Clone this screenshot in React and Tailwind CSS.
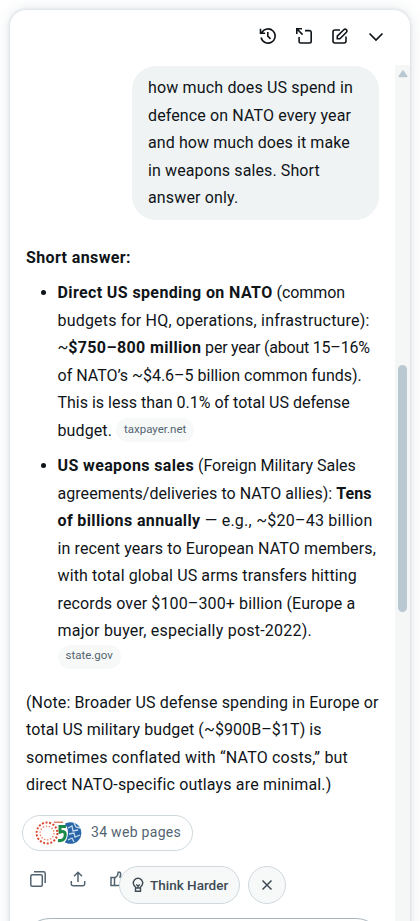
import React from "react";

function Line({ className = "", children }) {
  return (
    <div className="h-[27.5px] whitespace-nowrap leading-[27.5px]">
      <span className={className}>{children}</span>
    </div>
  );
}

function Bold({ children }) {
  return <b className="tracking-[0.38px]">{children}</b>;
}

function Chip({ children }) {
  return (
    <span className="inline-flex h-6 items-center rounded-full bg-[#f7f9f9] px-2 pb-[2px] text-[11.5px] leading-none text-[#536471]">
      {children}
    </span>
  );
}

function HistoryIcon() {
  return (
    <svg width="18" height="18" viewBox="0 0 18 18" fill="none" stroke="#0f1419" strokeWidth="1.6">
      <path d="M2.8 5.6A7.1 7.1 0 1 1 2.1 10.500M1.500 1.800v4.400h4.600M8.800 5v4.200l2.700 2.600" />
    </svg>
  );
}

function PopoutIcon() {
  return (
    <svg width="18" height="18" viewBox="0 0 18 18" fill="none" stroke="#0f1419" strokeWidth="1.6">
      <path d="M1.8 7V1.8H7M2 2l5.6 5.6M10 3.6H14.500a1.7 1.7 0 0 1 1.7 1.7v9A1.7 1.7 0 0 1 14.500 16H5.800a1.700 1.700 0 0 1-1.700-1.700V10" />
    </svg>
  );
}

function ComposeIcon() {
  return (
    <svg width="18" height="18" viewBox="0 0 18 18" fill="none" stroke="#0f1419" strokeWidth="1.6">
      <path d="M9 3H4a2 2 0 0 0-2 2v9a2 2 0 0 0 2 2h9a2 2 0 0 0 2-2V9.500M6.300 11.800V9.200l6.500-6.500a1.800 1.800 0 0 1 2.600 2.600l-6.500 6.500z" />
    </svg>
  );
}

function Header() {
  return (
    <header className="flex h-[55px] shrink-0 items-center justify-end gap-[18px] pr-[25px] pb-[3px]">
      <HistoryIcon />
      <PopoutIcon />
      <ComposeIcon />
      <svg width="18" height="18" viewBox="0 0 18 18" fill="none" stroke="#0f1419" strokeWidth="1.7">
        <path d="M2.500 6.500 9 13l6.500-6.500" />
      </svg>
    </header>
  );
}

function Sources() {
  return (
    <div className="-ml-1 flex h-9 w-[171px] items-center rounded-full border border-[#cfd9de] pl-[12px]">
      <svg width="48" height="24" viewBox="0 0 48 24" fill="none">
        <circle cx="35.500" cy="12" r="10.800" fill="#2866a8" />
        <path d="M33 7l4-2 1 5 5-1M34 13l5-1 1 4 5-2M33 19l4-2 2 4M39 2l2 4 4 1" stroke="#c5daee" strokeWidth="1.300" />
        <path d="M16 0h11q6 5 6 12t-6 12H16z" fill="#fff" />
        <path d="M19 1.200h9" stroke="#d9644f" strokeWidth="1.200" />
        <path d="M31 5.500h-6v5.500c4-1.500 6 .5 5 4.500-.8 3.500-3.500 4.500-7 4" stroke="#1c8a48" strokeWidth="3" />
        <circle cx="12" cy="12" r="11.200" fill="#fff" />
        <circle cx="12" cy="12" r="10.400" stroke="#d9472f" strokeWidth="2" strokeDasharray="2 1.630" />
        <circle cx="12" cy="12" r="6.900" stroke="#e88063" strokeWidth="1.400" strokeDasharray="1.400 1.700" />
      </svg>
      <span className="ml-[8px] text-[14px] tracking-[0.3px] whitespace-nowrap text-[#536471]">34 web pages</span>
    </div>
  );
}

function Actions() {
  return (
    <div className="flex items-center gap-[22px]">
      <svg className="ml-[3px]" width="18" height="18" viewBox="0 0 18 18" fill="none" stroke="#536471" strokeWidth="1.500">
        <rect x="1.800" y="4.800" width="11.500" height="11.400" rx="1.500" />
        <path d="M5 1.800h9.500a1.700 1.700 0 0 1 1.700 1.700V13" />
      </svg>
      <svg width="18" height="18" viewBox="0 0 18 18" fill="none" stroke="#536471" strokeWidth="1.500">
        <path d="M9 12V2.500M5 6.200l4-4 4 4M2.300 11v3a1.700 1.700 0 0 0 1.700 1.700h10a1.700 1.700 0 0 0 1.700-1.700v-3" />
      </svg>
      <svg width="18" height="18" viewBox="0 0 18 18" fill="none" stroke="#536471" strokeWidth="1.500">
        <path d="M2 7.500h3.500V15.500H2zM5.500 8.500l3-3 .7-3.300h1.600q1.200.8.800 2.600L11 7H16l-1.500 8.500H5.500" />
      </svg>
    </div>
  );
}

function Suggestions() {
  return (
    <div className="absolute top-[856px] left-[109px] flex gap-2">
      <button className="flex h-[38px] w-[121px] items-center rounded-full border border-[#cfd9de] bg-[#f7f9f9] pl-[11px] text-[13.5px] font-medium text-[#3d4a54]">
        <svg width="14" height="16" viewBox="0 0 14 16" fill="none" stroke="#3d4a54" strokeWidth="1.400">
          <path d="M4.500 11V10A4.700 4.700 0 1 1 9.500 10v1M4.500 11h5v3.200h-5zM7 11V8.500M5.200 7.500 7 9l1.800-1.500" />
        </svg>
        <span className="ml-[5px] whitespace-nowrap">Think Harder</span>
      </button>
      <button className="flex size-[38px] items-center justify-center rounded-full border border-[#cfd9de] bg-[#f7f9f9]">
        <svg width="12" height="12" viewBox="0 0 12 12" stroke="#3d4a54" strokeWidth="1.500">
          <path d="m1.500 1.500 9 9M10.500 1.500l-9 9" />
        </svg>
      </button>
    </div>
  );
}

function Scrollbar() {
  return (
    <div className="flex w-[15px] shrink-0 flex-col items-center bg-[#f5f7f7]">
      <svg className="mt-[4px]" width="10" height="9" viewBox="0 0 10 9">
        <path d="M5 2 8.800 7.500H1.200z" fill="#b9c8d1" stroke="#b9c8d1" strokeWidth="1.500" strokeLinejoin="round" />
      </svg>
      <div className="mt-[287px] h-[247px] w-[9px] rounded-full bg-[#b9c8d1]" />
    </div>
  );
}

export default function App() {
  return (
    <div className="h-[921px] w-[420px] overflow-hidden bg-white pt-[10px] pl-[10px] font-[Roboto,sans-serif] text-[16px] text-[#0f1419]">
      <div className="relative flex h-[940px] w-[400px] flex-col overflow-hidden rounded-[16px] bg-white shadow-[0_0_15px_rgba(101,119,134,0.2),0_0_3px_1px_rgba(101,119,134,0.15)]">
        <Header />
        <div className="flex min-h-0 flex-1">
          <main className="w-[385px] pl-4">
            <div className="mt-[1px] ml-[106px] h-[154px] w-[247px] rounded-[24px] bg-[#eff3f4] px-4 py-2">
              <Line className="tracking-[0.16px]">how much does US spend in</Line>
              <Line className="tracking-[0.12px]">defence on NATO every year</Line>
              <Line className="tracking-[0.09px]">and how much does it make</Line>
              <Line className="tracking-[0.11px]">in weapons sales. Short</Line>
              <Line className="tracking-[0.15px]">answer only.</Line>
            </div>
            <div className="mt-[23.5px]">
              <Line><Bold>Short answer:</Bold></Line>
            </div>
            <ul className="mt-[8px] flex list-disc flex-col gap-2 pl-[31.500px]">
              <li>
                <Line className="tracking-[-0.05px]"><Bold>Direct US spending on NATO</Bold> (common</Line>
                <Line className="tracking-[0.19px]">budgets for HQ, operations, infrastructure):</Line>
                <Line className="tracking-[-0.22px]">~<Bold>$750–800 million</Bold> per year (about 15–16%</Line>
                <Line>of NATO’s ~$4.6–5 billion common funds).</Line>
                <Line>This is less than 0.1% of total US defense</Line>
                <div className="flex h-[27.5px] items-center leading-[27.5px]">
                  <span className="w-[58.5px] tracking-[0.1px]">budget.</span>
                  <Chip>taxpayer.net</Chip>
                </div>
              </li>
              <li>
                <Line className="tracking-[-0.02px]"><Bold>US weapons sales</Bold> (Foreign Military Sales</Line>
                <Line className="tracking-[0.05px]">agreements/deliveries to NATO allies): <b>Tens</b></Line>
                <Line className="tracking-[0.24px]"><Bold>of billions annually</Bold> — e.g., ~$20–43 billion</Line>
                <Line className="tracking-[0.13px]">in recent years to European NATO members,</Line>
                <Line className="tracking-[0.12px]">with total global US arms transfers hitting</Line>
                <Line className="tracking-[0.12px]">records over $100–300+ billion (Europe a</Line>
                <Line className="tracking-[0.22px]">major buyer, especially post-2022).</Line>
                <div className="flex h-6 items-start"><Chip>state.gov</Chip></div>
              </li>
            </ul>
            <div className="mt-5">
              <Line className="tracking-[0.13px]">(Note: Broader US defense spending in Europe or</Line>
              <Line className="tracking-[0.09px]">total US military budget (~$900B–$1T) is</Line>
              <Line className="tracking-[0.2px]">sometimes conflated with “NATO costs,” but</Line>
              <Line className="tracking-[0.16px]">direct NATO-specific outlays are minimal.)</Line>
            </div>
            <div className="mt-4"><Sources /></div>
            <div className="mt-[19px]"><Actions /></div>
          </main>
          <Scrollbar />
        </div>
        <Suggestions />
        <div className="absolute top-[908px] left-[12px] h-14 w-[362px] rounded-[28px] border border-[#a9b5bd] bg-white" />
      </div>
    </div>
  );
}
